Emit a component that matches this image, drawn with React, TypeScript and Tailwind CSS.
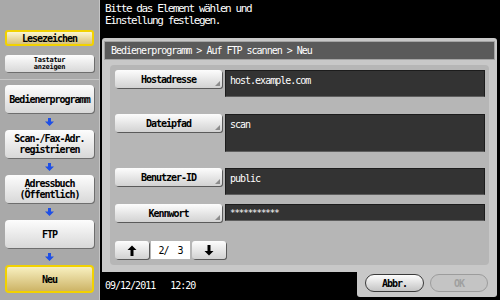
import React from 'react';

const mono = "font-['DejaVu_Sans_Mono',monospace] text-[10px] tracking-[-1px]";

const DownArrow = () => (
  <svg width="9" height="8" viewBox="0 0 9 8">
    <path d="M3 0h3v3.5h3L4.5 8 0 3.5h3z" fill="#1e4fe6" />
  </svg>
);

const SideButton = ({ label, yellow }: { label: React.ReactNode; yellow?: boolean }) => (
  <div
    className={
      yellow
        ? "flex h-[28px] items-center justify-center rounded-[4px] border-2 border-[#f2d200] bg-linear-to-b from-[#f8f0c0] to-[#cdb466] text-center font-bold leading-[11px] text-black"
        : "flex h-[28px] items-center justify-center rounded-[4px] bg-linear-to-b from-[#fdfdfd] to-[#d8d8d8] text-center font-bold leading-[11px] text-black shadow-[1px_1px_0_#6e6e6e]"
    }
  >
    {label}
  </div>
);

const Corner = () => (
  <svg className="absolute bottom-[2px] right-[2px]" width="5" height="5" viewBox="0 0 5 5">
    <path d="M5 0v5H0z" fill="#8c8c8c" />
  </svg>
);

const FieldButton = ({ label }: { label: string }) => (
  <div className="relative flex h-[18px] w-[107px] shrink-0 items-center justify-center rounded-[3px] bg-linear-to-b from-[#fdfdfd] to-[#d2d2d2] font-bold text-black shadow-[1px_1px_0_#5a5a5a]">
    {label}
    <Corner />
  </div>
);

const Field = ({ label, value, h, mt, small }: { label: string; value: string; h: string; mt: string; small?: boolean }) => (
  <div className={`flex gap-[3px] ${mt}`}>
    <FieldButton label={label} />
    <div className={`w-[260px] ${h} border border-[#1c1c1c] border-b-[#5e5e5e] bg-[#333333] pl-[4px] pt-[2px] text-white ${small ? "text-[9px] tracking-[-1px]" : ""}`}>
      {value}
    </div>
  </div>
);

const Arrow = ({ up }: { up?: boolean }) => (
  <svg width="10" height="11" viewBox="0 0 10 11" className={up ? "" : "rotate-180"}>
    <path d="M5 0.5L9.5 5H6.5v6h-3V5H0.5z" fill="#000" />
  </svg>
);

const PagerButton = ({ up }: { up?: boolean }) => (
  <div className="flex h-[18px] w-[34px] items-center justify-center rounded-[3px] bg-linear-to-b from-[#fdfdfd] to-[#d2d2d2] shadow-[1px_1px_0_#5a5a5a]">
    <Arrow up={up} />
  </div>
);

export default function App() {
  return (
    <div className={`flex h-[300px] w-[500px] overflow-hidden bg-black ${mono}`}>
      {/* Sidebar */}
      <div className="flex w-[100px] shrink-0 flex-col border-r border-r-[#c4c4c4] bg-[#a9a9a9]">
        <div className="flex h-[80px] flex-col border-b border-b-[#c6c6c6] px-[5px] pt-[30px]">
          <div className="flex h-[16px] items-center justify-center rounded-[3px] border-2 border-[#f2d200] bg-linear-to-b from-[#fbf5d2] to-[#d8c27a] font-bold text-black">
            Lesezeichen
          </div>
          <div className="mt-[9px] flex h-[17px] flex-col items-center justify-center rounded-[3px] bg-linear-to-b from-[#fdfdfd] to-[#d8d8d8] text-[7px] font-bold leading-[7px] tracking-[-0.3px] text-black shadow-[1px_1px_0_#6e6e6e]">
            <span>Tastatur</span>
            <span>anzeigen</span>
          </div>
        </div>
        <div className="flex flex-col px-[5px] pt-[5px]">
          <SideButton label="Bedienerprogramm" />
          <div className="flex h-[17px] items-center justify-center"><DownArrow /></div>
          <SideButton label={<span>Scan-/Fax-Adr.<br />registrieren</span>} />
          <div className="flex h-[17px] items-center justify-center"><DownArrow /></div>
          <SideButton label={<span>Adressbuch<br />(Öffentlich)</span>} />
          <div className="flex h-[17px] items-center justify-center"><DownArrow /></div>
          <SideButton label="FTP" />
          <div className="flex h-[17px] items-center justify-center"><DownArrow /></div>
          <SideButton label="Neu" yellow />
        </div>
      </div>

      {/* Main */}
      <div className="flex flex-1 flex-col pb-[3px] pl-[2px] pr-[3px]">
        <div className="h-[38px] pl-[3px] pt-[3px] text-[11px] leading-[12px] tracking-[-1.4px] text-white">
          <div>Bitte das Element wählen und</div>
          <div>Einstellung festlegen.</div>
        </div>

        <div className="flex h-[234px] flex-col rounded-t-[3px] bg-[#c8c8c8] px-[2px] pt-[3px]">
          <div className="flex h-[19px] items-center border border-[#a4a4a4] bg-[#5a5a5a] pl-[6px] text-white">
            Bedienerprogramm &gt; Auf FTP scannen &gt; Neu
          </div>
          <div className="mx-[6px] mt-[5px] flex h-[200px] flex-col rounded-[4px] bg-[#b6b6b6] pl-[5px] pt-[5px]">
            <Field label="Hostadresse" value="host.example.com" h="h-[27px]" mt="" />
            <Field label="Dateipfad" value="scan" h="h-[38px]" mt="mt-[17px]" />
            <Field label="Benutzer-ID" value="public" h="h-[27px]" mt="mt-[16px]" />
            <Field label="Kennwort" value="***********" h="h-[17px]" mt="mt-[9px]" small />
            <div className="mt-[19px] flex items-center gap-[2px]">
              <PagerButton up />
              <div className="flex h-[18px] w-[39px] items-center justify-center gap-[9px] bg-white text-black">
                <span>2/</span>
                <span>3</span>
              </div>
              <PagerButton />
            </div>
          </div>
        </div>

        <div className="flex h-[25px]">
          <div className="flex w-[255px] items-center gap-[15px] bg-black pl-[3px] pt-[2px] text-white">
            <span>09/12/2011</span>
            <span>12:20</span>
          </div>
          <div className="flex flex-1 gap-[6px] rounded-b-[3px] bg-[#c8c8c8] pl-[8px] pt-[2px]">
            <div className="flex h-[18px] w-[59px] items-center justify-center rounded-full border border-[#3a3a3a] bg-linear-to-b from-[#fdfdfd] to-[#c4c4c4] font-bold text-black">
              Abbr.
            </div>
            <div className="flex h-[18px] w-[58px] items-center justify-center rounded-full border border-[#9c9c9c] bg-[#c4c4c4] font-bold text-[#a0a0a0]">
              OK
            </div>
          </div>
        </div>
      </div>
    </div>
  );
}
